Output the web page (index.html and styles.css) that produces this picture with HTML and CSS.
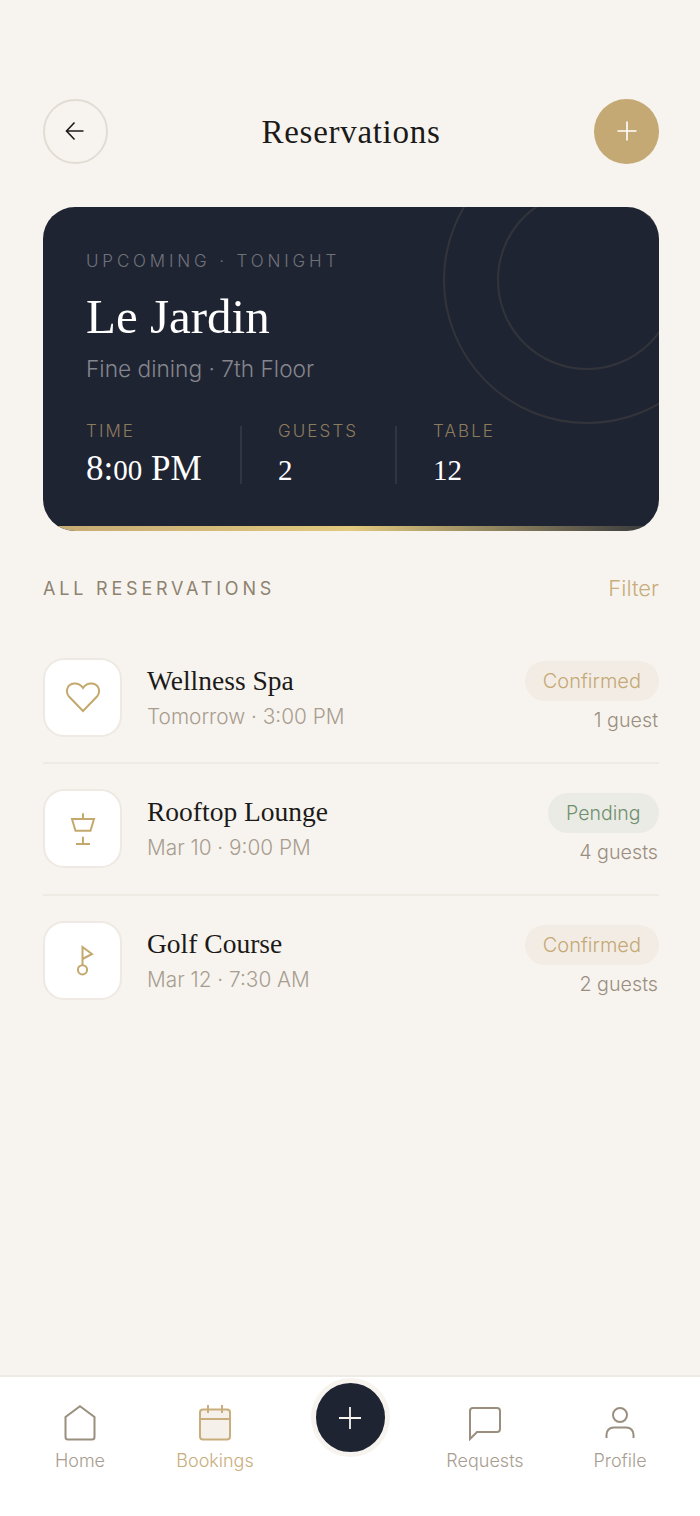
FILE: index.html
```html
<!DOCTYPE html>
<html lang="en">
<head>
  <meta charset="utf-8">
  <title>Reservations</title>
  <meta name="viewport" content="width=device-width, initial-scale=1.0">
  <link rel="stylesheet" href="styles.css">
</head>
<body>
  <main class="page">
    <header class="topbar">
      <button class="round-btn back-btn" aria-label="Back">
        <svg width="22" height="22" viewBox="0 0 22 22" fill="none" stroke="#1c1a18" stroke-width="1.6"><path d="M19.500 11H2.500M10.500 2.500 2.500 11l8 8.500"/></svg>
      </button>
      <h1 class="page-title">Reservations</h1>
      <button class="round-btn add-btn" aria-label="Add">
        <svg width="22" height="22" viewBox="0 0 22 22" fill="none" stroke="#fff" stroke-width="1.6"><path d="M11 1.500v19M1.500 11h19"/></svg>
      </button>
    </header>

    <section class="hero">
      <span class="ring ring-big"></span>
      <span class="ring ring-small"></span>
      <div class="hero-label">UPCOMING · TONIGHT</div>
      <div class="hero-name">Le Jardin</div>
      <div class="hero-sub">Fine dining · 7th Floor</div>
      <div class="stats">
        <div class="stat stat-time">
          <div class="stat-label">TIME</div>
          <div class="stat-value">8:<span class="onum">00</span> PM</div>
        </div>
        <div class="stat-line"></div>
        <div class="stat stat-guests">
          <div class="stat-label">GUESTS</div>
          <div class="stat-value"><span class="onum">2</span></div>
        </div>
        <div class="stat-line"></div>
        <div class="stat">
          <div class="stat-label">TABLE</div>
          <div class="stat-value"><span class="onum">12</span></div>
        </div>
      </div>
    </section>

    <div class="section-head">
      <span class="section-title">ALL RESERVATIONS</span>
      <span class="filter">Filter</span>
    </div>

    <ul class="list">
      <li class="row">
        <div class="row-icon">
          <svg width="36" height="36" viewBox="0 0 36 36" fill="none" stroke="#c4a96e" stroke-width="2"><path d="M18 32 4 17.500C0 13 2 5 9 4.500 13 4.200 16 6 18 9c2-3 5-4.800 9-4.500 7 .5 9 8.500 5 13z"/></svg>
        </div>
        <div class="row-main">
          <div class="row-title">Wellness Spa</div>
          <div class="row-sub">Tomorrow · 3:00 PM</div>
        </div>
        <div class="row-side">
          <span class="pill pill-gold">Confirmed</span>
          <span class="guests">1 guest</span>
        </div>
      </li>
      <li class="row">
        <div class="row-icon">
          <svg width="36" height="36" viewBox="0 0 36 36" fill="none" stroke="#c4a96e" stroke-width="2"><path d="M18 2.300V8M7 8h22l-3.500 11.700h-15zM18 25.700V33M11 33h14"/></svg>
        </div>
        <div class="row-main">
          <div class="row-title">Rooftop Lounge</div>
          <div class="row-sub">Mar 10 · 9:00 PM</div>
        </div>
        <div class="row-side">
          <span class="pill pill-green">Pending</span>
          <span class="guests">4 guests</span>
        </div>
      </li>
      <li class="row">
        <div class="row-icon">
          <svg width="36" height="36" viewBox="0 0 36 36" fill="none" stroke="#c4a96e" stroke-width="2"><path d="M17.500 22V4l9.500 7-9.500 5"/><circle cx="17.500" cy="26.800" r="4.600"/></svg>
        </div>
        <div class="row-main">
          <div class="row-title">Golf Course</div>
          <div class="row-sub">Mar 12 · 7:30 AM</div>
        </div>
        <div class="row-side">
          <span class="pill pill-gold">Confirmed</span>
          <span class="guests">2 guests</span>
        </div>
      </li>
    </ul>
  </main>

  <nav class="tabbar">
    <a class="tab">
      <svg width="36" height="36" viewBox="0 0 36 36" fill="none" stroke="currentColor" stroke-width="2"><path d="M18 1.300 32.500 12v20a2.500 2.500 0 0 1-2.500 2.500H6A2.500 2.500 0 0 1 3.500 32V12z"/></svg>
      <span>Home</span>
    </a>
    <a class="tab tab-active">
      <svg width="36" height="36" viewBox="0 0 36 36" fill="none" stroke="currentColor" stroke-width="2"><rect x="3" y="4.500" width="30" height="30" rx="3" fill="#f5f0ea"/><path d="M3 14h30M11 0v8M25 0v8"/></svg>
      <span>Bookings</span>
    </a>
    <div class="tab-fab">
      <button class="fab" aria-label="New">
        <svg width="24" height="24" viewBox="0 0 24 24" fill="none" stroke="#f7f4ef" stroke-width="1.800"><path d="M12 1v22M1 12h22"/></svg>
      </button>
    </div>
    <a class="tab">
      <svg width="36" height="36" viewBox="0 0 36 36" fill="none" stroke="currentColor" stroke-width="2"><path d="M3 6a3 3 0 0 1 3-3h24a3 3 0 0 1 3 3v18a3 3 0 0 1-3 3H10l-7 7z"/></svg>
      <span>Requests</span>
    </a>
    <a class="tab">
      <svg width="36" height="36" viewBox="0 0 36 36" fill="none" stroke="currentColor" stroke-width="2"><circle cx="18" cy="10" r="7"/><path d="M4.500 33v-3.500a7 7 0 0 1 7-7h13a7 7 0 0 1 7 7V33"/></svg>
      <span>Profile</span>
    </a>
  </nav>
</body>
</html>
```

FILE: styles.css
```css
* {
  box-sizing: border-box;
}

html, body {
  height: 100%;
}

body {
  margin: 0;
  display: flex;
  flex-direction: column;
  background: #f7f4ef;
  color: #1c1a18;
  font-family: Inter, "Liberation Sans", sans-serif;
  font-weight: 300;
}

.page {
  flex: 1;
  padding: 99px 41px 0 43px;
}

.topbar {
  display: flex;
  justify-content: space-between;
  align-items: center;
}

.round-btn {
  width: 64.600px;
  height: 64.600px;
  border-radius: 50%;
  display: flex;
  align-items: center;
  justify-content: center;
  padding: 0;
}

.back-btn {
  background: transparent;
  border: 2px solid #e2ddd4;
}

.add-btn {
  background: #c4a974;
  border: none;
}

.page-title {
  margin: 2px 0 0;
  font-family: "Liberation Serif", serif;
  font-weight: 400;
  font-size: 33px;
  line-height: 40px;
  letter-spacing: 0.7px;
}

.hero {
  position: relative;
  overflow: hidden;
  height: 324px;
  margin-top: 43px;
  padding: 43px 43px 0;
  border-radius: 32px;
  background: #1f2433;
  color: #fff;
}

.hero::after {
  content: "";
  position: absolute;
  left: 0;
  right: 0;
  bottom: 0;
  height: 5px;
  background: linear-gradient(90deg, #c4a974, #e2c97e 50%, rgba(226, 201, 126, 0.1));
}

.ring {
  position: absolute;
  border-radius: 50%;
  border: 2px solid rgba(196, 169, 116, 0.12);
}

.ring-big {
  width: 288px;
  height: 288px;
  top: -71px;
  right: -72px;
}

.ring-small {
  width: 180px;
  height: 180px;
  top: -17px;
  right: -18px;
}

.hero-label {
  font-size: 17px;
  line-height: 22px;
  letter-spacing: 3.850px;
  color: #70727a;
}

.hero-name {
  margin-top: 16px;
  font-family: "Liberation Serif", serif;
  font-size: 49px;
  line-height: 58px;
}

.hero-sub {
  margin-top: 8px;
  font-size: 22.700px;
  line-height: 30px;
  color: #85868c;
}

.stats {
  display: flex;
  gap: 36.500px;
  margin-top: 36px;
}

.stat-time {
  width: 117px;
}

.stat-guests {
  width: 80px;
}

.stat-label {
  font-size: 17px;
  line-height: 22px;
  letter-spacing: 2.100px;
  color: #8d7c5c;
}

.stat-value {
  margin-top: 9px;
  font-family: "Liberation Serif", serif;
  font-size: 35px;
  line-height: 36px;
  white-space: nowrap;
}

.onum {
  font-size: 29px;
}

.stat-line {
  width: 2px;
  height: 58px;
  margin-top: 6px;
  background: rgba(255, 255, 255, 0.08);
}

.section-head {
  display: flex;
  justify-content: space-between;
  align-items: center;
  margin-top: 44px;
  height: 26px;
}

.section-title {
  padding-top: 2px;
  font-size: 18px;
  letter-spacing: 3.800px;
  color: #8e8270;
  font-weight: 400;
}

.filter {
  font-size: 22px;
  color: #c9ad7c;
}

.list {
  list-style: none;
  margin: 32px 0 0;
  padding: 0;
}

.row {
  display: flex;
  align-items: center;
  padding: 25.300px 0;
  border-bottom: 2px solid #eeeae4;
}

.row:last-child {
  border-bottom: none;
}

.row-icon {
  flex: none;
  width: 79px;
  height: 79px;
  display: flex;
  align-items: center;
  justify-content: center;
  background: #fff;
  border: 2px solid #eee9e2;
  border-radius: 21px;
}

.row-main {
  flex: 1;
  margin-left: 25px;
}

.row-title {
  font-family: "Liberation Serif", serif;
  font-size: 27.500px;
  line-height: 34px;
}

.row-sub {
  margin-top: 5px;
  font-size: 20.800px;
  line-height: 28px;
  color: #a89d8f;
}

.row-side {
  display: flex;
  flex-direction: column;
  align-items: flex-end;
  gap: 6px;
  padding-top: 1px;
}

.pill {
  height: 40px;
  padding: 0 18px;
  border-radius: 20px;
  font-size: 20px;
  line-height: 40px;
}

.pill-gold {
  background: #f3ece5;
  color: #c4a974;
}

.pill-green {
  padding: 0 18.500px;
  font-size: 19.500px;
  background: #eaebe4;
  color: #6f8f6f;
}

.guests {
  padding-right: 1px;
  font-size: 19.700px;
  line-height: 27px;
  color: #9a8e7f;
}

.tabbar {
  flex: none;
  height: 141px;
  display: grid;
  grid-template-columns: repeat(5, 135px);
  padding: 0 12.500px;
  background: #fff;
  border-top: 2px solid #eeeae4;
}

.tab {
  display: flex;
  flex-direction: column;
  align-items: center;
  padding-top: 28px;
  color: #9a8e7f;
}

.tab span {
  margin-top: 7px;
  font-size: 18px;
  line-height: 26px;
  color: #a89d8f;
}

.tab-active,
.tab-active span {
  color: #c9ad7c;
}

.tab-fab {
  display: flex;
  justify-content: center;
}

.fab {
  width: 79px;
  height: 79px;
  margin-top: 1px;
  padding: 0;
  border: 5px solid #f7f4ef;
  border-radius: 50%;
  background: #1f2433;
  display: flex;
  align-items: center;
  justify-content: center;
}
```
